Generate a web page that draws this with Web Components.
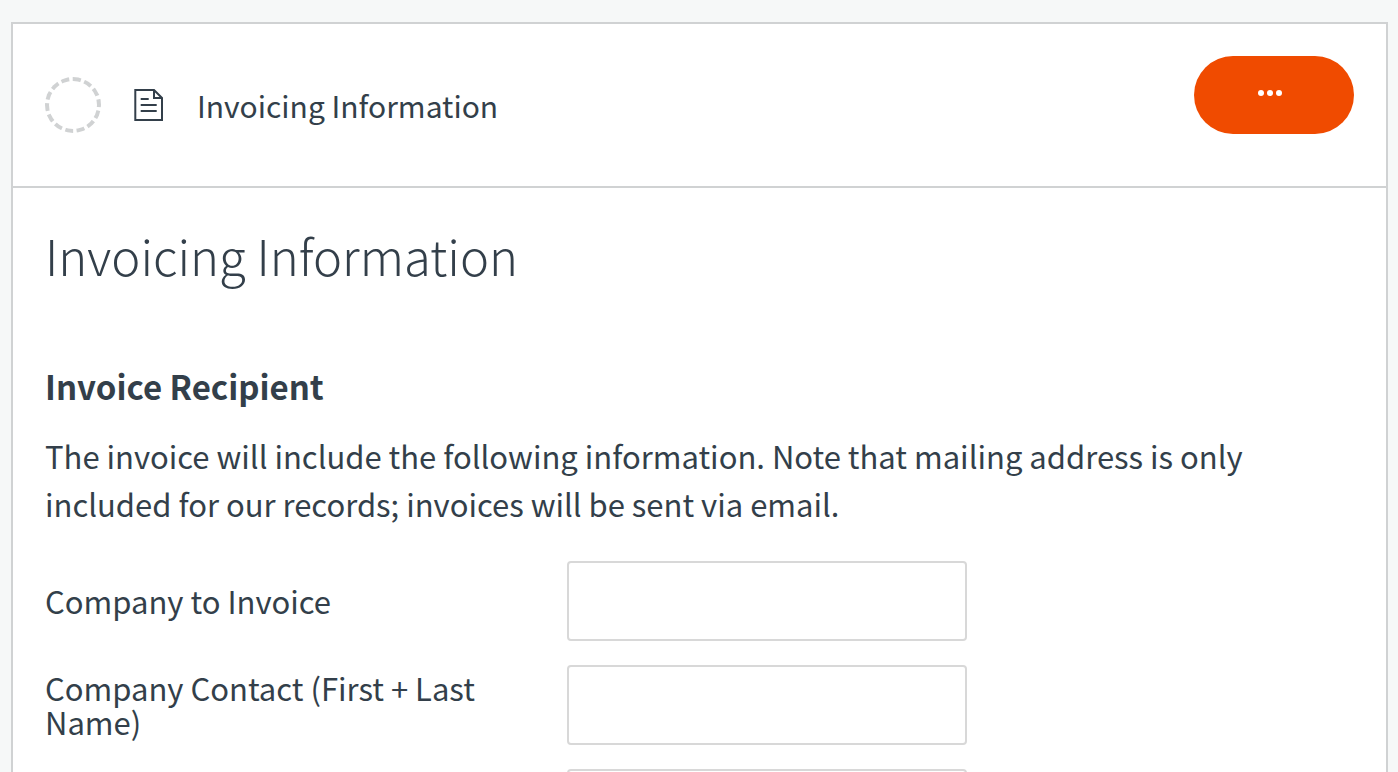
<!DOCTYPE html>
<html lang="en">
<head>
<meta charset="utf-8">
<title>Invoicing Information</title>
<style>
  html { scrollbar-width: none; }
  body {
    margin: 0;
    background: #f6f8f8;
    color: #333f4a;
    font: 400 31px/48px "Noto Sans CJK JP", "Open Sans", sans-serif;
  }
</style>
</head>
<body>
<task-card label="Invoicing Information">
  <form-section heading="Invoice Recipient">
    <span slot="intro">The invoice will include the following information. Note that mailing address is only included for our records; invoices will be sent via email.</span>
    <form-field label="Company to Invoice"></form-field>
    <form-field label="Company Contact (First + Last Name)"></form-field>
    <form-field></form-field>
  </form-section>
</task-card>

<script>
class BaseElement extends HTMLElement {
  connectedCallback() {
    if (this.shadowRoot) return;
    this.attachShadow({ mode: 'open' }).innerHTML = this.render();
  }
}

customElements.define('status-circle', class extends BaseElement {
  render() {
    return `<style>
      :host { display: block; box-sizing: border-box; width: 56px; height: 56px; border: 4px dashed #d0d2d3; border-radius: 50%; }
    </style>`;
  }
});

customElements.define('document-icon', class extends BaseElement {
  render() {
    return `<style>
      :host { display: block; width: 32px; height: 32px; }
      svg { display: block; }
    </style>
    <svg width="32" height="32" viewBox="0 0 32 32" fill="none" stroke="currentColor" stroke-width="2" aria-hidden="true">
      <path d="M2.3 1H21L29 9V31H2.3Z"/>
      <path d="M21 1V9H29"/>
      <path d="M7.7 10H15.7M7.7 16H23.7M7.7 22H23.7"/>
    </svg>`;
  }
});

customElements.define('more-button', class extends BaseElement {
  render() {
    return `<style>
      :host { display: block; }
      button {
        display: flex; justify-content: center; align-items: center;
        box-sizing: border-box; width: 160px; height: 78px; padding: 0 8px 4px 0;
        border: 0; border-radius: 39px; background: #f04b00; color: #fff; cursor: pointer;
      }
      svg { display: block; }
    </style>
    <button type="button" aria-label="More actions">
      <svg width="24" height="6" viewBox="0 0 24 6" fill="currentColor" aria-hidden="true">
        <circle cx="3" cy="3" r="3"/><circle cx="12" cy="3" r="3"/><circle cx="21" cy="3" r="3"/>
      </svg>
    </button>`;
  }
});

customElements.define('task-header', class extends BaseElement {
  render() {
    return `<style>
      :host { display: flex; align-items: center; gap: 32px; box-sizing: border-box; min-height: 164px; padding: 32px; border-bottom: 2px solid #d0d2d3; }
      .label { flex: 1; font-size: 30px; }
      more-button { align-self: flex-start; }
    </style>
    <status-circle></status-circle>
    <document-icon></document-icon>
    <span class="label"><slot></slot></span>
    <more-button></more-button>`;
  }
});

customElements.define('task-card', class extends BaseElement {
  render() {
    const label = this.getAttribute('label');
    return `<style>
      :host { display: block; box-sizing: border-box; min-height: calc(100vh - 22px); margin: 22px 10px 0 11px; border: 2px solid #d0d2d3; border-bottom: 0; background: #fff; }
      main { padding: 32px 32px 0; }
      h1 { margin: 0 0 72px; font-size: 49px; line-height: 70px; font-weight: 300; }
    </style>
    <task-header>${label}</task-header>
    <main><h1>${label}</h1><slot></slot></main>`;
  }
});

customElements.define('form-section', class extends BaseElement {
  render() {
    return `<style>
      :host { display: block; }
      h2 { margin: 0 0 22px; font-size: 33px; line-height: 48px; font-weight: 700; }
      p { margin: 0 0 33px; }
      .fields { display: grid; gap: 24px; }
    </style>
    <h2>${this.getAttribute('heading')}</h2>
    <p><slot name="intro"></slot></p>
    <div class="fields"><slot></slot></div>`;
  }
});

customElements.define('form-field', class extends BaseElement {
  render() {
    return `<style>
      :host { display: grid; grid-template-columns: minmax(0, 522px) minmax(0, 400px); align-items: center; }
      label { padding-right: 48px; line-height: 34px; }
      input { box-sizing: border-box; width: 100%; height: 80px; padding: 0 16px; border: 2px solid #d8d8d8; border-radius: 4px; background: #fff; color: inherit; font: inherit; }
    </style>
    <label for="field">${this.getAttribute('label') || ''}</label>
    <input id="field" type="text">`;
  }
});
</script>
</body>
</html>
